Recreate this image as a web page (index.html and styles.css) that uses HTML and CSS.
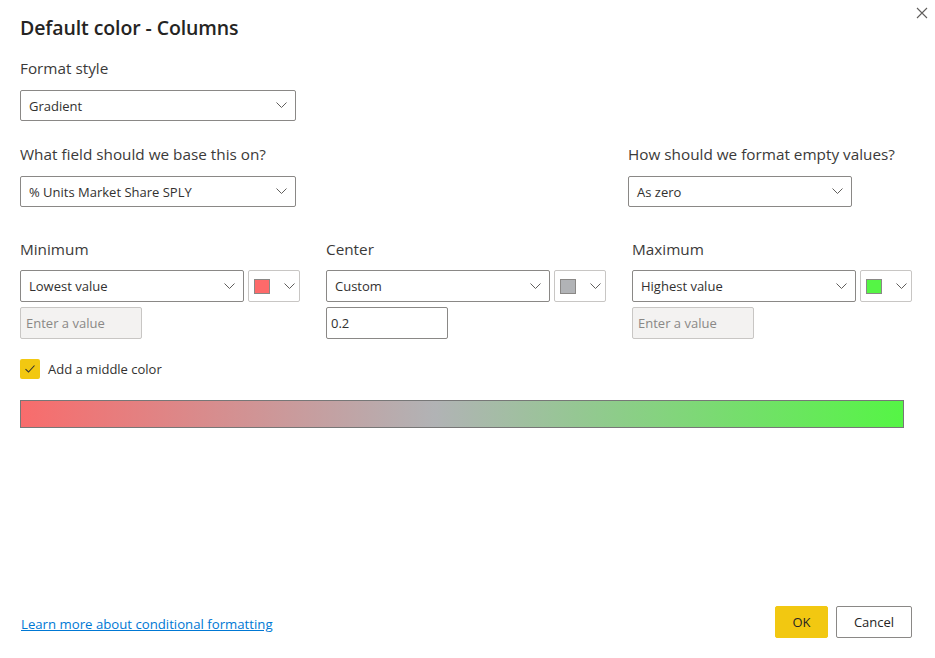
FILE: index.html
```html
<!DOCTYPE html>
<html lang="en">
<head>
<meta charset="utf-8">
<title>Default color - Columns</title>
<link rel="stylesheet" href="styles.css">
</head>
<body>
<div class="dialog">
  <div class="header">
    <h1 class="title">Default color - Columns</h1>
    <button class="close" aria-label="Close">
      <svg width="12" height="12" viewBox="0 0 12 12"><path d="M1 1L11 11M11 1L1 11" stroke="#605e5c" stroke-width="1.1" fill="none"/></svg>
    </button>
  </div>

  <div class="section">
    <div class="label">Format style</div>
    <div class="select wide"><span>Gradient</span><svg class="chev" width="11" height="7" viewBox="0 0 11 7"><path d="M0.5 0.5L5.5 5.5L10.5 0.5" stroke="#605e5c" stroke-width="1" fill="none"/></svg></div>
  </div>

  <div class="row-two">
    <div class="section">
      <div class="label">What field should we base this on?</div>
      <div class="select wide"><span>% Units Market Share SPLY</span><svg class="chev" width="11" height="7" viewBox="0 0 11 7"><path d="M0.5 0.5L5.5 5.5L10.5 0.5" stroke="#605e5c" stroke-width="1" fill="none"/></svg></div>
    </div>
    <div class="section right">
      <div class="label">How should we format empty values?</div>
      <div class="select mid"><span>As zero</span><svg class="chev" width="11" height="7" viewBox="0 0 11 7"><path d="M0.5 0.5L5.5 5.5L10.5 0.5" stroke="#605e5c" stroke-width="1" fill="none"/></svg></div>
    </div>
  </div>

  <div class="stops">
    <div class="stop">
      <div class="label">Minimum</div>
      <div class="stop-row">
        <div class="select mid"><span>Lowest value</span><svg class="chev" width="11" height="7" viewBox="0 0 11 7"><path d="M0.5 0.5L5.5 5.5L10.5 0.5" stroke="#605e5c" stroke-width="1" fill="none"/></svg></div>
        <div class="picker"><span class="swatch red"></span><svg class="chev" width="11" height="7" viewBox="0 0 11 7"><path d="M0.5 0.5L5.5 5.5L10.5 0.5" stroke="#605e5c" stroke-width="1" fill="none"/></svg></div>
      </div>
      <div class="input disabled">Enter a value</div>
    </div>
    <div class="stop">
      <div class="label">Center</div>
      <div class="stop-row">
        <div class="select mid"><span>Custom</span><svg class="chev" width="11" height="7" viewBox="0 0 11 7"><path d="M0.5 0.5L5.5 5.5L10.5 0.5" stroke="#605e5c" stroke-width="1" fill="none"/></svg></div>
        <div class="picker"><span class="swatch gray"></span><svg class="chev" width="11" height="7" viewBox="0 0 11 7"><path d="M0.5 0.5L5.5 5.5L10.5 0.5" stroke="#605e5c" stroke-width="1" fill="none"/></svg></div>
      </div>
      <div class="input active">0.2</div>
    </div>
    <div class="stop">
      <div class="label">Maximum</div>
      <div class="stop-row">
        <div class="select mid"><span>Highest value</span><svg class="chev" width="11" height="7" viewBox="0 0 11 7"><path d="M0.5 0.5L5.5 5.5L10.5 0.5" stroke="#605e5c" stroke-width="1" fill="none"/></svg></div>
        <div class="picker"><span class="swatch green"></span><svg class="chev" width="11" height="7" viewBox="0 0 11 7"><path d="M0.5 0.5L5.5 5.5L10.5 0.5" stroke="#605e5c" stroke-width="1" fill="none"/></svg></div>
      </div>
      <div class="input disabled">Enter a value</div>
    </div>
  </div>

  <div class="check-row">
    <span class="checkbox"><svg width="12" height="10" viewBox="0 0 12 10"><path d="M1.5 5.2L4.5 8L10.5 1.5" stroke="#323130" stroke-width="1.1" fill="none"/></svg></span>
    <span class="check-label">Add a middle color</span>
  </div>

  <div class="gradient"></div>

  <div class="footer">
    <a class="link" href="#">Learn more about conditional formatting</a>
    <div class="buttons">
      <button class="btn primary">OK</button>
      <button class="btn secondary">Cancel</button>
    </div>
  </div>
</div>
</body>
</html>
```

FILE: styles.css
```css
* { box-sizing: border-box; }

html, body {
  margin: 0;
  padding: 0;
  background: #ffffff;
}

body {
  font-family: "Open Sans", "Noto Sans", "Liberation Sans", sans-serif;
  color: #323130;
  width: 935px;
  height: 658px;
  overflow: hidden;
}

.dialog {
  display: flex;
  flex-direction: column;
  height: 658px;
  padding: 0 23px 20px 20px;
}

.header {
  display: flex;
  justify-content: space-between;
  align-items: flex-start;
  height: 58px;
}

.title {
  margin: 14px 0 0 0;
  font-size: 19.5px;
  line-height: 28px;
  font-weight: 600;
  color: #252423;
  letter-spacing: -0.1px;
}

.close {
  margin: 6px -17px 0 0;
  padding: 0;
  width: 14px;
  height: 14px;
  border: none;
  background: none;
  display: flex;
  align-items: center;
  justify-content: center;
}

.label {
  font-size: 15.3px;
  line-height: 20px;
  color: #3b3a39;
  margin-bottom: 12px;
  white-space: nowrap;
}

.select {
  height: 31px;
  border: 1px solid #8a8886;
  border-radius: 2px;
  display: flex;
  align-items: center;
  justify-content: space-between;
  padding: 0 8px 0 8px;
  font-size: 13px;
  color: #323130;
  background: #fff;
}

.select.wide { width: 276px; }
.select.mid { width: 224px; }

.chev { flex: none; }

.row-two {
  display: flex;
  justify-content: space-between;
  margin-top: 23px;
  width: 832px;
}

.section.right { width: 224px; }

.stops {
  display: grid;
  grid-template-columns: 306px 306px 306px;
  margin-top: 32px;
}

.stop .label { margin-bottom: 11px; }

.stop-row {
  display: flex;
  gap: 4px;
}

.stop-row .select { height: 32px; }

.picker {
  width: 52px;
  height: 32px;
  border: 1px solid #c8c6c4;
  border-radius: 2px;
  display: flex;
  align-items: center;
  justify-content: space-between;
  padding: 0 4px 0 5px;
}

.swatch {
  width: 16px;
  height: 15px;
  border: 1px solid #8a8886;
}

.swatch.red { background: #fd6a6a; }
.swatch.gray { background: #b1b3b6; }
.swatch.green { background: #55f545; }

.input {
  margin-top: 5px;
  width: 122px;
  height: 32px;
  border-radius: 2px;
  display: flex;
  align-items: center;
  padding: 0 5px;
  font-size: 13px;
}

.input.disabled {
  background: #f3f2f1;
  border: 1px solid #c8c6c4;
  color: #8a8886;
}

.input.active {
  background: #fff;
  border: 1px solid #8a8886;
  color: #323130;
  padding-left: 4px;
}

.check-row {
  display: flex;
  align-items: center;
  gap: 8px;
  margin-top: 20px;
}

.checkbox {
  width: 20px;
  height: 20px;
  border-radius: 2px;
  background: #f2c811;
  display: flex;
  align-items: center;
  justify-content: center;
}

.check-label {
  font-size: 13px;
  color: #323130;
}

.gradient {
  margin-top: 21px;
  width: 884px;
  height: 28px;
  border: 1px solid #777777;
  background: linear-gradient(to right, #f86c6c 0%, #b1b3b5 47%, #55f545 100%);
}

.footer {
  margin-top: auto;
  display: flex;
  justify-content: space-between;
  align-items: center;
}

.link {
  font-size: 13.2px;
  color: #0078d4;
  text-decoration: underline;
  margin-left: 1px;
  margin-top: 4px;
}

.buttons {
  display: flex;
  gap: 8px;
}

.btn {
  height: 32px;
  border-radius: 2px;
  font-family: inherit;
  font-size: 13px;
  padding: 0;
  color: #252423;
}

.btn.primary {
  width: 53px;
  background: #f2c811;
  border: 1px solid #f2c811;
}

.btn.secondary {
  width: 76px;
  background: #fff;
  border: 1px solid #8a8886;
}
```
